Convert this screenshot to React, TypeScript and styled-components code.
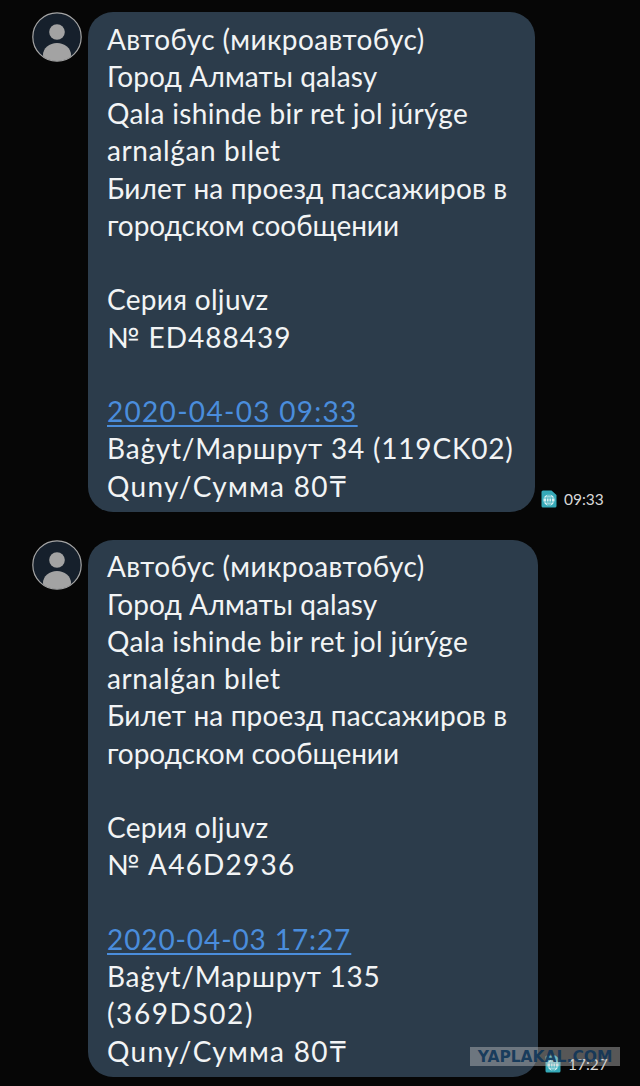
import React from 'react'
import styled, { createGlobalStyle } from 'styled-components'

const GlobalStyle = createGlobalStyle`
  html, body {
    margin: 0;
    padding: 0;
    background: #060606;
  }
`

const Page = styled.div`
  position: relative;
  width: 640px;
  height: 1086px;
  overflow: hidden;
  box-sizing: border-box;
  padding: 12px 0 0 32px;
  display: flex;
  flex-direction: column;
  gap: 28px;
  background: #060606;
  font-family: Lato, "Noto Sans", sans-serif;
`

const MessageRow = styled.div`
  display: flex;
  align-items: flex-start;
  gap: 6px;
`

const Avatar = styled.svg`
  flex: none;
  width: 50px;
  height: 50px;
`

const Bubble = styled.div<{ $width: number }>`
  flex: none;
  box-sizing: border-box;
  width: ${p => p.$width}px;
  padding: 8.5px 10px 7px 19px;
  border-radius: 25px;
  background: #2c3c4b;
`

const Line = styled.div<{ $spacing?: number }>`
  height: 37.25px;
  line-height: 37.25px;
  font-size: 28px;
  color: #f2f4f5;
  white-space: nowrap;
  letter-spacing: ${p => p.$spacing ?? 0.3}px;
`

const DateLink = styled(Line)`
  color: #4a8ddc;
  span {
    text-decoration: underline;
    text-decoration-thickness: 1.5px;
    text-underline-offset: 3px;
  }
`

const Meta = styled.div<{ $gap: number }>`
  align-self: flex-end;
  display: flex;
  align-items: center;
  gap: 7px;
  margin-left: ${p => p.$gap}px;
  margin-bottom: 4px;
  color: #d8d8d8;
  font-size: 15.5px;
`

const SimIcon = styled.svg`
  flex: none;
  width: 16px;
  height: 18px;
`

const Watermark = styled.div`
  position: absolute;
  left: 470px;
  top: 1047px;
  width: 150px;
  height: 19px;
  display: flex;
  align-items: center;
  justify-content: center;
  background: rgba(200, 200, 200, 0.42);
  color: rgba(14, 52, 88, 0.9);
  font-family: "DejaVu Sans", sans-serif;
  font-size: 15.5px;
  font-weight: 700;
  white-space: nowrap;
`

const Person = () => (
  <Avatar viewBox="0 0 50 50">
    <defs>
      <clipPath id="avatar-clip">
        <circle cx="25" cy="25" r="24" />
      </clipPath>
    </defs>
    <circle cx="25" cy="25" r="24.2" fill="#16202c" stroke="#a5a5a5" strokeWidth="1.2" />
    <g clipPath="url(#avatar-clip)" fill="#a3a3a3">
      <circle cx="25" cy="20" r="7.8" />
      <ellipse cx="25" cy="43" rx="14" ry="12" />
    </g>
  </Avatar>
)

const Sim = () => (
  <SimIcon viewBox="0 0 16 18">
    <path d="M2 0.5 H10.5 L15.5 5 V16 a1.5 1.5 0 0 1 -1.5 1.5 H2 a1.5 1.5 0 0 1 -1.5 -1.5 V2 a1.5 1.5 0 0 1 1.5 -1.5 Z" fill="#35a9b8" />
    <circle cx="8" cy="10" r="5.6" fill="#d9f1f3" />
    <g fill="none" stroke="#35a9b8" strokeWidth="0.8">
      <ellipse cx="8" cy="10" rx="2.5" ry="5.4" />
      <path d="M8 4.5 V15.5 M2.6 8 H13.4 M2.6 12 H13.4" />
    </g>
  </SimIcon>
)

type TextLine = { text: string; spacing: number }

type Message = {
  width: number
  metaGap: number
  time: string
  serial: TextLine
  date: TextLine
  tail: TextLine[]
}

const head: TextLine[] = [
  { text: 'Автобус (микроавтобус)', spacing: 0.4 },
  { text: 'Город Алматы qalasy', spacing: 0.1 },
  { text: 'Qala ishinde bir ret jol júrýge', spacing: 0.33 },
  { text: 'arnalǵan bılet', spacing: 0.6 },
  { text: 'Билет на проезд пассажиров в', spacing: 0.15 },
  { text: 'городском сообщении', spacing: -0.05 },
]

const messages: Message[] = [
  {
    width: 447,
    metaGap: 0,
    time: '09:33',
    serial: { text: '№ ED488439', spacing: 1 },
    date: { text: '2020-04-03 09:33', spacing: 1.3 },
    tail: [
      { text: 'Baġyt/Маршрут 34 (119CK02)', spacing: 0.8 },
      { text: 'Quny/Сумма 80₸', spacing: 1.3 },
    ],
  },
  {
    width: 450,
    metaGap: 1,
    time: '17:27',
    serial: { text: '№ A46D2936', spacing: 1.2 },
    date: { text: '2020-04-03 17:27', spacing: 0.9 },
    tail: [
      { text: 'Baġyt/Маршрут 135', spacing: 0.7 },
      { text: '(369DS02)', spacing: 1.6 },
      { text: 'Quny/Сумма 80₸', spacing: 1.3 },
    ],
  },
]

export default function App(): React.ReactElement {
  return (
    <Page>
      <GlobalStyle />
      {messages.map(m => (
        <MessageRow key={m.time}>
          <Person />
          <Bubble $width={m.width}>
            {head.map(l => (
              <Line key={l.text} $spacing={l.spacing}>{l.text}</Line>
            ))}
            <Line>&nbsp;</Line>
            <Line>Серия oljuvz</Line>
            <Line $spacing={m.serial.spacing}>{m.serial.text}</Line>
            <Line>&nbsp;</Line>
            <DateLink $spacing={m.date.spacing}>
              <span>{m.date.text}</span>
            </DateLink>
            {m.tail.map(l => (
              <Line key={l.text} $spacing={l.spacing}>{l.text}</Line>
            ))}
          </Bubble>
          <Meta $gap={m.metaGap}>
            <Sim />
            {m.time}
          </Meta>
        </MessageRow>
      ))}
      <Watermark>YAPLAKAL.COM</Watermark>
    </Page>
  )
}
